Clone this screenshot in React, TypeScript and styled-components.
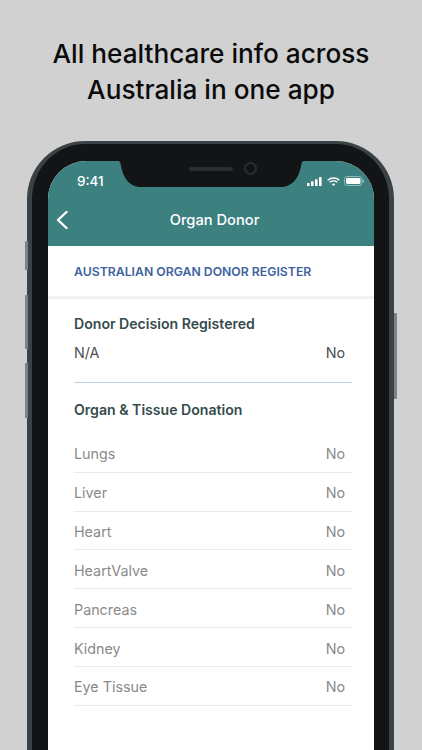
import styled, { createGlobalStyle } from "styled-components";

const organs = ["Lungs", "Liver", "Heart", "HeartValve", "Pancreas", "Kidney", "Eye Tissue"];

const GlobalStyle = createGlobalStyle`
	html, body {
		margin: 0;
		padding: 0;
		height: 100%;
		background: #d1d1d1;
		overflow: hidden;
	}
`;

const SignalIcon = () => (
	<svg width="15" height="9" viewBox="0 0 15 9" fill="#fff">
		<rect x="0" y="6" width="2.6" height="3" rx="0.6" />
		<rect x="4" y="4.200" width="2.6" height="4.800" rx="0.6" />
		<rect x="8" y="2.200" width="2.6" height="6.800" rx="0.6" />
		<rect x="12" y="0" width="2.6" height="9" rx="0.6" />
	</svg>
);

const WifiIcon = () => (
	<svg width="13" height="9" viewBox="0 0 13 9" fill="none" stroke="#fff" strokeWidth="1.4">
		<path d="M0.7 3.200 C3.900 0.200 9.100 0.200 12.300 3.200" />
		<path d="M2.700 5.200 C4.800 3.500 8.200 3.500 10.300 5.200" />
		<path d="M6.500 9 L4.700 7 C5.700 6.300 7.300 6.300 8.300 7 Z" fill="#fff" stroke="none" />
	</svg>
);

const BatteryIcon = () => (
	<svg width="20" height="10" viewBox="0 0 20 10" fill="none">
		<rect x="0.5" y="0.5" width="17.500" height="9" rx="2.800" stroke="#fff" strokeOpacity="0.45" />
		<rect x="2" y="2" width="14.500" height="6" rx="1.400" fill="#fff" />
		<rect x="18.800" y="3.400" width="1.200" height="3.200" rx="0.6" fill="#fff" fillOpacity="0.5" />
	</svg>
);

const NotchShape = () => (
	<NotchSvg viewBox="0 0 186 26" width="186" height="26">
		<path
			d="M0 0 H186 C184 0 183.500 2 183 5 C181 16 175 26 163 26 H23 C11 26 5 16 3 5 C2.500 2 2 0 0 0 Z"
			fill="#121416"
		/>
	</NotchSvg>
);

export default function App() {
	return (
		<>
			<GlobalStyle />
			<Page>
				<Headline>
					All healthcare info across
					<br />
					Australia in one app
				</Headline>
				<Phone>
					<VolumeButton $top={97} $height={29} />
					<VolumeButton $top={151} $height={54} />
					<VolumeButton $top={219} $height={55} />
					<PowerButton />
					<Screen>
						<NotchShape />
						<Speaker />
						<Camera />
						<Header>
							<StatusBar>
								<Time>9:41</Time>
								<StatusIcons>
									<SignalIcon />
									<WifiIcon />
									<BatteryIcon />
								</StatusIcons>
							</StatusBar>
							<NavBar>
								<BackButton>
									<svg width="14" height="20" viewBox="0 0 14 20" fill="none" stroke="#fff" strokeWidth="2.4" strokeLinecap="round" strokeLinejoin="round">
										<path d="M11.500 2 L3 10 L11.500 18" />
									</svg>
								</BackButton>
								<NavTitle>Organ Donor</NavTitle>
							</NavBar>
						</Header>
						<SectionBar>AUSTRALIAN ORGAN DONOR REGISTER</SectionBar>
						<Content>
							<GroupTitle>Donor Decision Registered</GroupTitle>
							<DecisionRow>
								<span>N/A</span>
								<RowValue>No</RowValue>
							</DecisionRow>
							<Divider />
							<GroupTitle>Organ &amp; Tissue Donation</GroupTitle>
							<OrganList>
								{organs.map((organ) => (
									<OrganRow key={organ}>
										<span>{organ}</span>
										<RowValue>No</RowValue>
									</OrganRow>
								))}
							</OrganList>
						</Content>
					</Screen>
				</Phone>
			</Page>
		</>
	);
}

const Page = styled.div`
	width: 422px;
	height: 750px;
	overflow: hidden;
	background: #d1d1d1;
	display: flex;
	flex-direction: column;
	align-items: center;
	font-family: Inter, "Liberation Sans", sans-serif;
`;

const Headline = styled.h1`
	margin: 36px 0 0;
	font-size: 26.200px;
	line-height: 36px;
	font-weight: 500;
	color: #0b0b0b;
	text-align: center;
`;

const Phone = styled.div`
	position: relative;
	flex: none;
	box-sizing: border-box;
	width: 367px;
	height: 760px;
	margin: 33px 0 0 -1px;
	padding: 17px 15px 0 16px;
	background: #121416;
	border: 5px solid #3b4245;
	border-top-width: 3px;
	border-radius: 58px;
`;

const VolumeButton = styled.div<{ $top: number; $height: number }>`
	position: absolute;
	left: -7px;
	top: ${({ $top }) => $top}px;
	width: 2.500px;
	height: ${({ $height }) => $height}px;
	background: #7c8285;
	border-radius: 1px 0 0 1px;
`;

const PowerButton = styled.div`
	position: absolute;
	right: -8px;
	top: 169px;
	width: 3px;
	height: 86px;
	background: #7c8285;
	border-radius: 0 1px 1px 0;
`;

const Screen = styled.div`
	position: relative;
	height: 100%;
	background: #fff;
	border-radius: 38px 38px 0 0;
	overflow: hidden;
`;

const NotchSvg = styled.svg`
	position: absolute;
	left: 70px;
	top: 0;
`;

const Speaker = styled.div`
	position: absolute;
	left: 141px;
	top: 6px;
	width: 44px;
	height: 4px;
	border-radius: 2px;
	background: #2b2e30;
`;

const Camera = styled.div`
	position: absolute;
	left: 196px;
	top: 1px;
	width: 9px;
	height: 9px;
	border-radius: 50%;
	background: #121416;
	border: 2px solid #2b2e30;
`;

const Header = styled.header`
	height: 85px;
	background: #3d8080;
	color: #fff;
`;

const StatusBar = styled.div`
	display: flex;
	align-items: center;
	justify-content: space-between;
	height: 40px;
	padding: 0 10px 0 29px;
`;

const Time = styled.span`
	font-size: 13.500px;
	font-weight: 500;
`;

const StatusIcons = styled.div`
	display: flex;
	align-items: center;
	gap: 4.500px;
`;

const NavBar = styled.div`
	position: relative;
	display: flex;
	justify-content: center;
	align-items: center;
	height: 38px;
	padding-left: 7px;
`;

const BackButton = styled.div`
	position: absolute;
	left: 7px;
	top: 9px;
	display: flex;
`;

const NavTitle = styled.span`
	font-size: 14.700px;
	font-weight: 500;
`;

const SectionBar = styled.div`
	height: 50px;
	display: flex;
	align-items: center;
	padding-left: 26px;
	border-bottom: 3px solid #f0f1f3;
	color: #3f62a0;
	font-size: 12.250px;
	font-weight: 600;
`;

const Content = styled.div`
	padding: 16px 22px 0 26px;
`;

const GroupTitle = styled.div`
	font-size: 14.100px;
	line-height: 18px;
	font-weight: 600;
	color: #364b4d;
`;

const RowValue = styled.span`
	padding-right: 7px;
`;

const DecisionRow = styled.div`
	display: flex;
	justify-content: space-between;
	margin-top: 11px;
	font-size: 14.300px;
	line-height: 18px;
	color: #4a4f50;
`;

const Divider = styled.div`
	height: 1px;
	margin: 20px 0 18px;
	background: #bcd5dc;
`;

const OrganList = styled.div`
	margin-top: 15px;
`;

const OrganRow = styled.div`
	box-sizing: border-box;
	display: flex;
	justify-content: space-between;
	align-items: center;
	height: 38.830px;
	padding-top: 2px;
	border-bottom: 1px solid #ebebeb;
	font-size: 14.300px;
	color: #8a8a8a;
`;
